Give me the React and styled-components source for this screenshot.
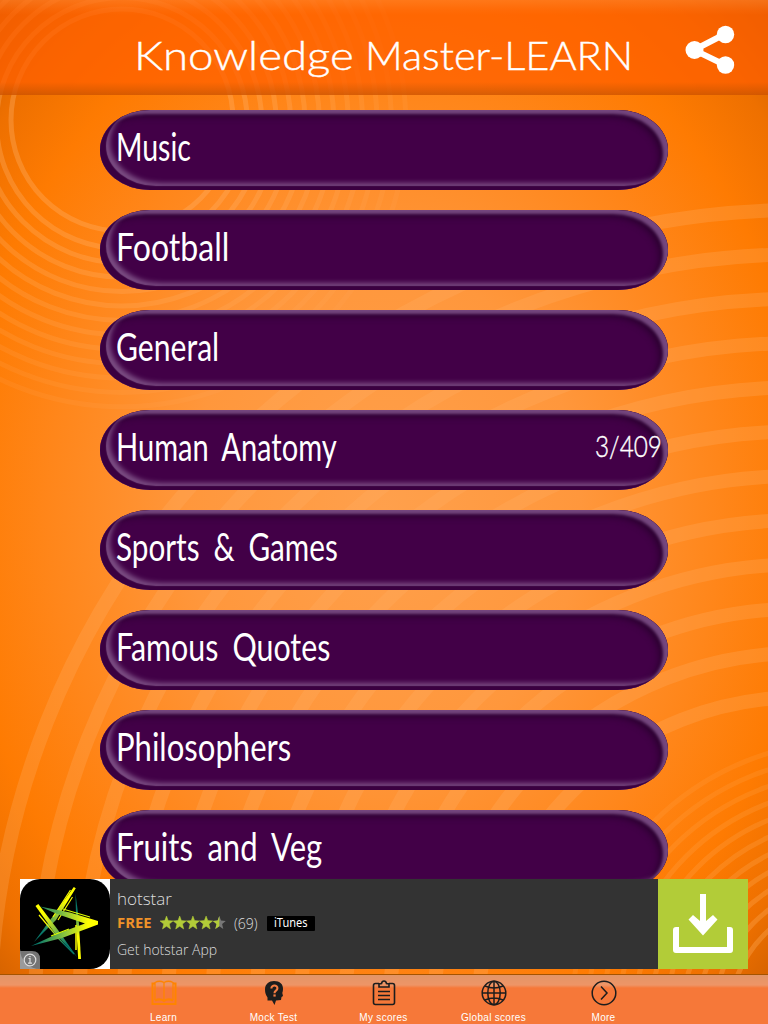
import React, { useLayoutEffect, useRef, useState } from "react";
import styled, { createGlobalStyle } from "styled-components";

const GlobalStyle = createGlobalStyle`
  * {
    box-sizing: border-box;
  }
  html,
  body {
    margin: 0;
    padding: 0;
    overflow: hidden;
  }
`;

const categories = [
  { name: "Music", width: 75 },
  { name: "Football", width: 113 },
  { name: "General", width: 103 },
  { name: "Human Anatomy", width: 221, progress: "3/409" },
  { name: "Sports & Games", width: 222 },
  { name: "Famous Quotes", width: 214 },
  { name: "Philosophers", width: 175 },
  { name: "Fruits and Veg", width: 206 },
];

// squeezes or stretches a line of text to a given width
const FitText = ({ width, children }) => {
  const ref = useRef(null);
  const [scale, setScale] = useState(1);
  useLayoutEffect(() => {
    setScale(width / ref.current.offsetWidth);
  }, [width]);
  return (
    <Fit $width={width}>
      <span ref={ref} style={{ transform: `scaleX(${scale})` }}>
        {children}
      </span>
    </Fit>
  );
};

const Backdrop = () => (
  <BackdropSvg viewBox="0 0 768 1024">
    <defs>
      <radialGradient
        id="base"
        gradientUnits="userSpaceOnUse"
        cx="0"
        cy="0"
        r="1"
        gradientTransform="translate(384 510) scale(560 700)"
      >
        <stop offset="0" stopColor="#ffa04c" />
        <stop offset="0.35" stopColor="#ff973c" />
        <stop offset="0.6" stopColor="#ff861a" />
        <stop offset="0.76" stopColor="#fe7b02" />
        <stop offset="0.88" stopColor="#ee7000" />
        <stop offset="1" stopColor="#c95c00" />
      </radialGradient>
    </defs>
    <rect width="768" height="1024" fill="url(#base)" />
    <g fill="none" stroke="#ffb066" strokeWidth="5" opacity="0.36">
      {Array.from({ length: 13 }, (_, i) => (
        <circle key={i} cx="122" cy={i === 0 ? 120 : 123} r={111 + i * 14.4} opacity={1 - i * 0.055} />
      ))}
    </g>
    <g fill="none" stroke="#ffb066" strokeWidth="14" opacity="0.27">
      {Array.from({ length: 12 }, (_, i) => (
        <circle key={i} cx="800" cy="1020" r={810 - i * 44.3} />
      ))}
    </g>
    <g fill="none" stroke="#ffaa55" strokeWidth="5" opacity="0.36">
      {Array.from({ length: 11 }, (_, i) => (
        <circle key={i} cx="850" cy="1020" r={279 - i * 15.8} opacity={0.5 + i * 0.05} />
      ))}
    </g>
  </BackdropSvg>
);

const ShareIcon = () => (
  <svg width="50" height="50" viewBox="0 0 50 50">
    <path d="M40 9 9 25l31 15" fill="none" stroke="#fff" strokeWidth="6" />
    <g fill="#fff">
      <circle cx="40.500" cy="9.500" r="8.700" />
      <circle cx="9.500" cy="25" r="9" />
      <circle cx="40.500" cy="40" r="8.700" />
    </g>
  </svg>
);

const HotstarLogo = () => (
  <svg width="90" height="90" viewBox="0 0 90 90">
    <defs>
      <linearGradient id="up" x1="0" y1="1" x2="1" y2="0">
        <stop offset="0.2" stopColor="#08786a" />
        <stop offset="0.55" stopColor="#a5cf30" />
        <stop offset="0.75" stopColor="#ffff00" />
      </linearGradient>
      <linearGradient id="across" x1="0" y1="0" x2="1" y2="0">
        <stop offset="0.1" stopColor="#08786a" />
        <stop offset="0.5" stopColor="#8ac43e" />
        <stop offset="0.85" stopColor="#ffff00" />
      </linearGradient>
      <linearGradient id="down" x1="0" y1="0" x2="1" y2="1">
        <stop offset="0.2" stopColor="#ffff00" />
        <stop offset="0.5" stopColor="#7dbb45" />
        <stop offset="0.75" stopColor="#08786a" />
      </linearGradient>
      <linearGradient id="drop" x1="0" y1="0" x2="0" y2="1">
        <stop offset="0.25" stopColor="#08786a" />
        <stop offset="0.5" stopColor="#9bcd35" />
        <stop offset="0.65" stopColor="#ffff00" />
      </linearGradient>
    </defs>
    <rect width="90" height="90" fill="#fff" />
    <rect width="90" height="90" rx="20" fill="#000" />
    <path d="M55.500 14.500 58.500 38 61 80h-2.800L56.300 50z" fill="url(#drop)" />
    <path d="M56 46v25" stroke="#ff0" strokeWidth="1.500" />
    <path d="m53.800 8 2 1.200L36 41 14 63l19-26z" fill="url(#up)" />
    <path d="M50.500 11 33 38M52.500 18 38 41" stroke="#f4f800" strokeWidth="1.200" />
    <path d="m15.500 27 2.800-2L38 51l19 27-23-25z" fill="url(#down)" />
    <path d="m19 36 20 24 15 15" fill="none" stroke="url(#down)" strokeWidth="1.200" />
    <path d="m20 27.500 30 6L78 42v3.500L42 59l-31 8 27-12.500 27-10-28-9.500z" fill="url(#across)" />
    <path d="m43 30 27 8M31 57l18-7" stroke="#dfff00" strokeWidth="1.200" />
    <path d="M0 72h12q8 0 8 8v10H0z" fill="#888" opacity="0.85" />
    <g fill="none" stroke="#ddd" strokeWidth="1.200">
      <circle cx="10" cy="81" r="5.800" />
      <path d="M8.500 79.500H10V84M8 84.200h4M10 77v1.200" />
    </g>
  </svg>
);

const starPath =
  "M6.500 0 8.200 4.600 13 4.900 9.300 8 10.500 13 6.500 10.200 2.500 13 3.700 8 0 4.900 4.800 4.600z";

const Stars = () => (
  <svg width="66" height="14" viewBox="0 0 66 14">
    {[0, 1, 2, 3, 4].map((i) => (
      <path
        key={i}
        d={starPath}
        transform={`translate(${i * 13.2} 0)`}
        fill={i === 4 ? "#777" : "#b2cc38"}
        stroke={i === 4 ? "none" : "#b2cc38"}
        strokeWidth="0.5"
      />
    ))}
    <path
      d="M6.500 0V10.200L2.500 13 3.700 8 0 4.900 4.800 4.600z"
      transform="translate(52.800 0)"
      fill="#b2cc38"
    />
  </svg>
);

const DownloadIcon = () => (
  <svg width="60" height="60" viewBox="0 0 60 60">
    <path
      d="M0 36q0-3 3-3h3v20h48V33h3q3 0 3 3v20q0 3-3 3H3q-3 0-3-3z"
      fill="#fff"
    />
    <path d="M27 0h6v27l7-6 4.500 4.500L30 41.500 15.500 25.500 20 21l7 6z" fill="#fff" />
  </svg>
);

const BookIcon = () => (
  <svg width="26" height="26" viewBox="0 0 26 26" fill="none" stroke="#ff8400">
    <path d="M4 3.500H1.500v20.500h23V3.500H22" strokeWidth="2" />
    <path d="M4 20V2.500q4.500-2.500 9 0 4.500-2.500 9 0V20M13 2.500V20" strokeWidth="1.300" />
    <path d="M4 20.500q5-2.500 9 .5 4-3 9-.5" strokeWidth="2" />
  </svg>
);

const HeadIcon = () => (
  <svg width="26" height="26" viewBox="0 0 26 26">
    <path
      d="M13 1c6 0 9 3 9 8 0 2-.5 3-.7 4l.7 3-1.500 1-.5 3-5 .5L13.500 25 11 20.500H6.500v-3C5 15 4 13 4 9.500 4 4 8 1 13 1z"
      fill="#1d1d1d"
    />
    <path
      d="M10.400 8.400c0-4 6.200-3.600 6 0-.1 2.400-2.900 2-2.900 4.800"
      fill="none"
      stroke="#f47d43"
      strokeWidth="2.100"
    />
    <rect x="12.400" y="14.400" width="2.300" height="2.200" fill="#f47d43" />
  </svg>
);

const ClipboardIcon = () => (
  <svg width="26" height="26" viewBox="0 0 26 26" fill="none" stroke="#1d1d1d">
    <path
      d="M8 3.500H4.500Q2.500 3.500 2.500 5.500V22.500Q2.500 24.500 4.500 24.500H21.500Q23.500 24.500 23.500 22.500V5.500Q23.500 3.500 21.500 3.500H18"
      strokeWidth="1.600"
    />
    <path d="M8 7V4l2.500-.5Q11 1 13 1t2.500 2.500L18 4v3z" strokeWidth="1.600" />
    <path d="M7 11.500h12M7 15.500h12M7 19.500h12" strokeWidth="1.500" />
  </svg>
);

const GlobeIcon = () => (
  <svg width="26" height="26" viewBox="0 0 26 26" fill="none" stroke="#1d1d1d" strokeWidth="1.500">
    <circle cx="13" cy="13" r="11.800" />
    <ellipse cx="13" cy="13" rx="6.200" ry="11.800" />
    <path d="M13 1v24M1 13h24M4 6q9 4 18 0M4 20q9-4 18 0" />
  </svg>
);

const MoreIcon = () => (
  <svg width="26" height="26" viewBox="0 0 26 26" fill="none" stroke="#1d1d1d" strokeWidth="1.500">
    <circle cx="13" cy="13" r="11.800" />
    <path d="m10 6.500 6 6.500-6 6.500" />
  </svg>
);

const tabs = [
  { label: "Learn", icon: BookIcon },
  { label: "Mock Test", icon: HeadIcon },
  { label: "My scores", icon: ClipboardIcon },
  { label: "Global scores", icon: GlobeIcon },
  { label: "More", icon: MoreIcon },
];

const App = () => {
  return (
    <Screen>
      <GlobalStyle />
      <Backdrop />
      <Header>
        <Title>
          <FitText width={220}>Knowledge</FitText>{" "}
          <FitText width={268}>Master-LEARN</FitText>
        </Title>
        <ShareButton>
          <ShareIcon />
        </ShareButton>
      </Header>
      <List>
        {categories.map((item) => (
          <Category key={item.name}>
            <CategoryName>
              <FitText width={item.width}>{item.name}</FitText>
            </CategoryName>
            {item.progress && (
              <Progress>
                <FitText width={67}>{item.progress}</FitText>
              </Progress>
            )}
          </Category>
        ))}
      </List>
      <AdRow>
        <Ad>
          <HotstarLogo />
          <AdText>
            <AdName>
              <FitText width={55}>hotstar</FitText>
            </AdName>
            <AdRating>
              <Free>
                <FitText width={35}>FREE</FitText>
              </Free>
              <Stars />
              <Votes>
                <FitText width={24}>(69)</FitText>
              </Votes>
              <Store>
                <FitText width={34}>iTunes</FitText>
              </Store>
            </AdRating>
            <AdLine>
              <FitText width={100}>Get hotstar App</FitText>
            </AdLine>
          </AdText>
          <Download>
            <DownloadIcon />
          </Download>
        </Ad>
      </AdRow>
      <TabBar>
        {tabs.map(({ label, icon: Icon }) => (
          <Tab key={label}>
            <Icon />
            <span>{label}</span>
          </Tab>
        ))}
      </TabBar>
    </Screen>
  );
};

const Screen = styled.div`
  position: relative;
  isolation: isolate;
  width: 768px;
  height: 1024px;
  display: flex;
  flex-direction: column;
  overflow: hidden;
  background: #ff8a20;
  color: white;
  font-family: Lato, sans-serif;
`;

const BackdropSvg = styled.svg`
  position: absolute;
  inset: 0;
  z-index: -1;
  width: 100%;
  height: 100%;
`;

const Fit = styled.span`
  display: inline-block;
  width: ${(props) => props.$width}px;
  white-space: nowrap;

  span {
    display: inline-block;
    transform-origin: left center;
  }
`;

const Header = styled.header`
  flex: none;
  height: 95px;
  display: flex;
  align-items: center;
  justify-content: space-between;
  padding: 0 33px 0 134px;
  background:
    linear-gradient(rgba(255, 160, 80, 0.3), rgba(255, 130, 40, 0.15) 10px, transparent 15px),
    linear-gradient(transparent 82px, rgba(110, 60, 0, 0.28) 95px),
    rgba(255, 94, 0, 0.72);
`;

const Title = styled.h1`
  display: flex;
  gap: 11px;
  margin: 14px 0 0;
  font-size: 40px;
  line-height: 48px;
  font-weight: 300;
  -webkit-text-stroke: 0.4px white;
`;

const ShareButton = styled.div`
  height: 50px;
  margin-top: 5px;
`;

const List = styled.main`
  flex: none;
  height: 784px;
  overflow: hidden;
  display: flex;
  flex-direction: column;
  gap: 20px;
  padding: 15px 100px 0;
`;

const Category = styled.div`
  flex: none;
  height: 80px;
  display: flex;
  align-items: center;
  justify-content: space-between;
  padding: 0 6px 8px 16px;
  border-radius: 50px / 40px;
  background: #420047;
  box-shadow:
    inset 6px -4px 1px #3a0040,
    inset -5px 4px 3px #74467e,
    inset 11px -8px 5px -1px #7b4d83,
    inset -9px 7px 6px #2c0031;
`;

const CategoryName = styled.div`
  font-size: 38px;
  line-height: 46px;
  word-spacing: 8px;
`;

const Progress = styled.div`
  font-size: 29px;
  font-weight: 300;
  line-height: 46px;
  -webkit-text-stroke: 0.4px white;
`;

const AdRow = styled.div`
  flex: none;
  height: 95px;
  padding: 0 20px;
`;

const Ad = styled.div`
  display: flex;
  height: 90px;
  background: #333;
  font-family: "Open Sans", sans-serif;
`;

const AdText = styled.div`
  flex: 1;
  padding: 8px 0 0 7px;
  color: #ddd;
`;

const AdName = styled.div`
  font-size: 17px;
  line-height: 24px;
  font-weight: 300;
`;

const AdRating = styled.div`
  display: flex;
  align-items: center;
  height: 24px;
`;

const Free = styled.b`
  margin-right: 8px;
  color: #f09228;
  font-size: 14px;
  line-height: 24px;
`;

const Votes = styled.span`
  margin: 0 9px 0 8px;
  font-size: 14px;
  font-weight: 300;
`;

const Store = styled.span`
  height: 15px;
  padding: 0 7px;
  border-radius: 1px;
  background: black;
  color: white;
  font-family: "Noto Sans", sans-serif;
  font-size: 12px;
  line-height: 14px;
`;

const AdLine = styled.div`
  margin-top: 3px;
  font-size: 14px;
  line-height: 24px;
  font-weight: 300;
`;

const Download = styled.div`
  display: flex;
  align-items: center;
  justify-content: center;
  width: 90px;
  background: #b2cc38;
`;

const TabBar = styled.nav`
  flex: none;
  height: 50px;
  display: flex;
  justify-content: center;
  padding-right: 1px;
  border-top: 1px solid #a55300;
  background: linear-gradient(#e29567, #ee9567 10px, #f67839 13px, #f67839);
`;

const Tab = styled.div`
  width: 110px;
  display: flex;
  flex-direction: column;
  align-items: center;
  padding-top: 5px;
  font-family: "Liberation Sans", Arial, sans-serif;
  font-size: 10px;
  line-height: 12px;
  letter-spacing: 0.3px;

  span {
    margin-top: 6px;
  }
`;

export default App;
